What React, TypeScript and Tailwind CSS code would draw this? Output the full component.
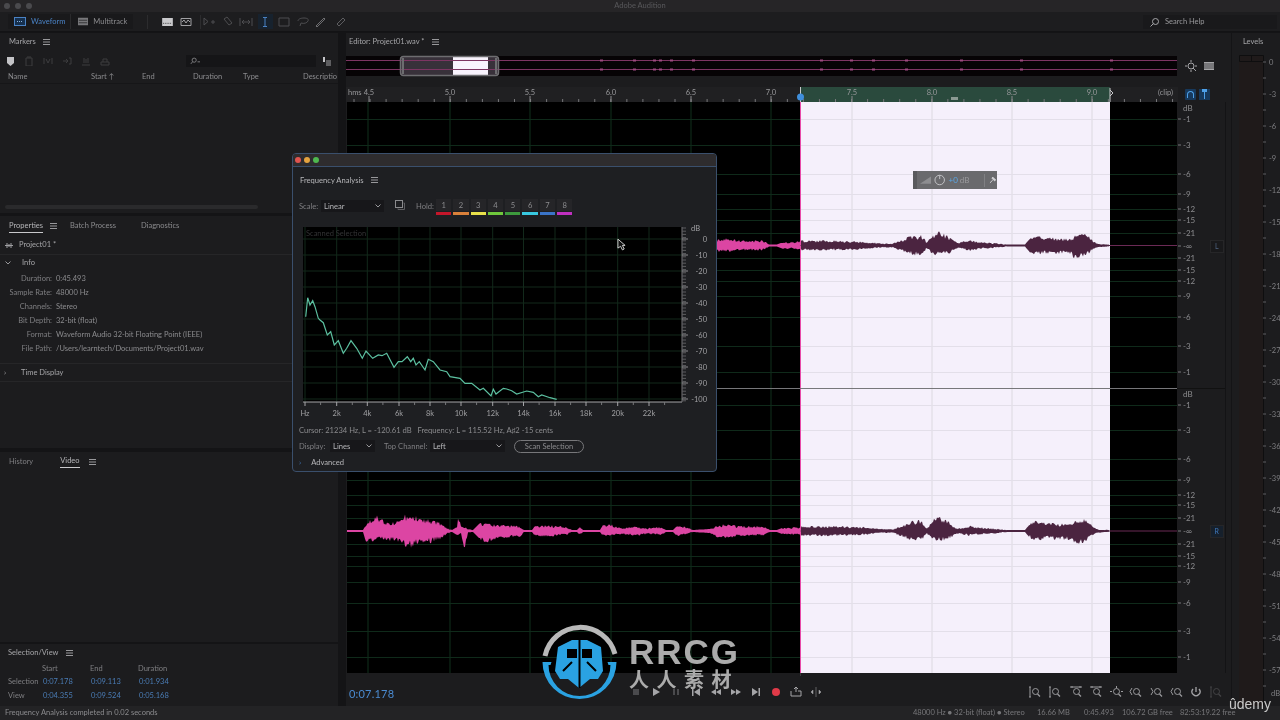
const FONT = "font-['Lato','Liberation_Sans',sans-serif]";

// [x, up, down] in screen px, the waveform is drawn from these
const pinkEnv = [
  [347, 1, 1], [363, 1, 1], [366, 6, 11], [375, 17, 10], [387, 8, 9], [397, 10, 11], [408, 18, 17], [420, 13, 12], [430, 11, 12], [440, 9, 8],
  [447, 3, 3], [452, 1, 1], [457, 4, 4], [458, 21, 6], [461, 6, 2], [464, 5, 20], [468, 2, 2], [473, 1, 1], [480, 8, 8], [484, 8, 12],
  [500, 6, 7], [520, 5, 6], [524, 1, 1], [532, 1, 1], [535, 5, 5], [547, 6, 6], [567, 4, 4], [572, 1, 1], [577, 1, 1], [580, 4, 4], [583, 1, 1],
  [600, 1, 1], [603, 6, 5], [610, 7, 5], [623, 3, 3], [636, 5, 5], [647, 3, 3], [662, 4, 4], [667, 1, 1], [673, 1, 1], [677, 5, 5], [687, 4, 3],
  [693, 1, 1], [710, 2, 2], [717, 6, 6], [727, 7, 7], [740, 5, 5], [763, 5, 5], [770, 1, 1], [777, 1, 1], [782, 3, 3], [798, 4, 4], [801, 4, 4],
];
const darkEnv = [
  [801, 5, 5], [830, 5, 5], [863, 4, 4], [883, 2, 2], [893, 2, 2], [907, 8, 8], [913, 11, 10], [922, 10, 9], [927, 3, 3], [933, 12, 10], [940, 14, 10],
  [950, 8, 8], [957, 3, 3], [970, 5, 5], [987, 3, 3], [1000, 2, 2], [1007, 1, 1], [1025, 1, 1], [1030, 7, 7], [1035, 10, 10], [1047, 8, 8], [1070, 7, 9],
  [1075, 10, 13], [1085, 13, 12], [1092, 6, 5], [1097, 2, 2], [1110, 1, 1],
];

function envPath(env: number[][], cy: number, seed: number) {
  const top: string[] = [];
  const bot: string[] = [];
  for (let i = 0; i < env.length - 1; i++) {
    const [x0, u0, d0] = env[i];
    const [x1, u1, d1] = env[i + 1];
    for (let x = x0; x < x1; x++) {
      const t = (x - x0) / (x1 - x0);
      const n = Math.abs(Math.sin(x * 12.9898 + seed) * 43758.5453) % 1;
      const n2 = Math.abs(Math.sin(x * 78.233 + seed) * 12543.1234) % 1;
      const big = u0 + d0 > 3;
      const ku = big ? 0.58 + n * 0.48 : 1;
      const kd = big ? 0.58 + n2 * 0.48 : 1;
      top.push(`${x},${(cy - (u0 + (u1 - u0) * t) * ku).toFixed(1)}`);
      bot.unshift(`${x},${(cy + (d0 + (d1 - d0) * t) * kd).toFixed(1)}`);
    }
  }
  return 'M' + top.concat(bot).join('L') + 'Z';
}

const gridX = [368, 450, 530, 611, 691, 771, 852, 932, 1012, 1092];
const gridY = [119, 145, 174, 194, 209, 220, 233, 258, 270, 281, 296, 317, 346, 372, 405, 430, 459, 480, 495, 505, 518, 544, 556, 566, 582, 603, 631, 657];

function Waveform() {
  return (
    <svg viewBox="347 102 830 571" className="w-[830px] h-[571px] block bg-black shrink-0 ml-[1px]">
      {gridX.map((x) => <line key={x} x1={x} x2={x} y1={102} y2={673} stroke="#11301c" />)}
      {gridY.map((y) => <line key={y} x1={347} x2={1177} y1={y + 0.5} y2={y + 0.5} stroke="#0f2a1a" />)}
      <rect x={801} y={102} width={309} height={571} fill="#f5f0fb" />
      <line x1={800.5} x2={800.5} y1={102} y2={673} stroke="#e84aa8" />
      {[852, 932, 1012, 1092].map((x) => <line key={x} x1={x} x2={x} y1={102} y2={673} stroke="#dcd9e0" />)}
      {gridY.map((y) => <line key={y} x1={801} x2={1110} y1={y + 0.5} y2={y + 0.5} stroke="#e3dfe9" />)}
      <line x1={347} x2={1177} y1={388.5} y2={388.5} stroke="#77777a" />
      {[245.5, 531].map((cy, i) => (
        <g key={cy}>
          <line x1={347} x2={801} y1={cy} y2={cy} stroke="#a83a80" />
          <line x1={1110} x2={1177} y1={cy} y2={cy} stroke="#6b2a55" />
          <line x1={801} x2={1110} y1={cy} y2={cy} stroke="#4b2440" />
          <path d={envPath(pinkEnv, cy, i)} fill="#dc45a3" />
          <path d={envPath(darkEnv, cy, i + 3)} fill="#4b2440" />
        </g>
      ))}
    </svg>
  );
}

const dbTop = [[108, 'dB'], [119, '-1'], [145, '-3'], [174, '-6'], [194, '-9'], [209, '-12'], [220, '-15'], [233, '-21'], [246, '-∞'], [258, '-21'], [270, '-15'], [281, '-12'], [296, '-9'], [317, '-6'], [346, '-3'], [372, '-1']] as const;
const dbBot = [[394, 'dB'], [405, '-1'], [430, '-3'], [459, '-6'], [480, '-9'], [495, '-12'], [505, '-15'], [518, '-21'], [531, '-∞'], [544, '-21'], [556, '-15'], [566, '-12'], [582, '-9'], [603, '-6'], [631, '-3'], [657, '-1']] as const;

function DbScale() {
  return (
    <svg viewBox="1177 102 49 571" className="w-[49px] h-[571px] block shrink-0">
      <line x1={1177} x2={1226} y1={388.5} y2={388.5} stroke="#111" />
      <line x1={1225.5} x2={1225.5} y1={102} y2={673} stroke="#131315" />
      {[...dbTop, ...dbBot].map(([y, t]) => (
        <g key={`${y}${t}`}>
          {t !== 'dB' && <line x1={1178} x2={1181} y1={y} y2={y} stroke="#77777a" />}
          <text x={1183} y={y + 3} fontSize={8} fill="#8b8b8e" fontFamily="Lato, sans-serif">{t}</text>
        </g>
      ))}
      <rect x={1210.5} y={240.5} width={13} height={12} fill="#19191b" stroke="#262628" />
      <text x={1215} y={249} fontSize={7} fill="#4f6380" fontFamily="Lato, sans-serif">L</text>
      <rect x={1210.5} y={525.5} width={13} height={12} fill="#16202c" stroke="#262628" />
      <text x={1214.5} y={534} fontSize={7} fill="#3f78bd" fontFamily="Lato, sans-serif">R</text>
    </svg>
  );
}

function Ruler() {
  const labels = [[369, '4.5'], [450, '5.0'], [530, '5.5'], [611, '6.0'], [691, '6.5'], [771, '7.0'], [852, '7.5'], [932, '8.0'], [1012, '8.5'], [1092, '9.0']] as const;
  const ticks: number[] = [];
  for (let x = 354; x < 1177; x += 16.05) ticks.push(x);
  return (
    <svg viewBox="346 87 832 15" className="w-[832px] h-[15px] block shrink-0">
      <rect x={346} y={87} width={832} height={15} fill="#202022" />
      <rect x={801} y={87} width={309} height={15} fill="#2a4a3d" />
      <text x={348} y={95} fontSize={7.5} fill="#98989b" fontFamily="Lato, sans-serif">hms</text>
      {ticks.map((x) => <line key={x} x1={x} x2={x} y1={99} y2={102} stroke="#77777a" />)}
      {labels.map(([x, t]) => (
        <g key={t}>
          <line x1={x} x2={x} y1={96} y2={102} stroke="#8b8b8e" />
          <text x={x} y={95} fontSize={7.5} textAnchor="middle" fill="#98989b" fontFamily="Lato, sans-serif">{t}</text>
        </g>
      ))}
      <text x={1158} y={95} fontSize={7.5} fill="#98989b" fontFamily="Lato, sans-serif">(clip)</text>
      <rect x={951} y={97} width={7} height={3} fill="#8b9a93" />
      <line x1={800.5} x2={800.5} y1={87} y2={102} stroke="#c9c9cc" />
      <circle cx={800.5} cy={97} r={3.5} fill="#3f8fdc" />
      <path d="M1110 88v14M1110 90l3 3-3 3" stroke="#c9c9cc" fill="none" />
    </svg>
  );
}

function Overview() {
  return (
    <svg viewBox="346 55 831 22" className="w-[831px] h-[22px] block shrink-0">
      <rect x={346} y={56} width={831} height={20} fill="#060305" />
      <rect x={400} y={56} width={99} height={20} rx={3} fill="#38313a" />
      <rect x={453} y={57} width={35} height={18} fill="#f8f3fd" />
      <line x1={346} x2={1177} y1={60.5} y2={60.5} stroke="#7d3563" />
      <line x1={346} x2={1177} y1={69.5} y2={69.5} stroke="#7d3563" />
      {[600, 633, 653, 659, 670, 692, 820, 850, 872, 905, 960, 1020, 1110].map((x) => (
        <g key={x} fill="#9c4a80">
          <rect x={x} y={59.5} width={3} height={2} />
          <rect x={x} y={68.5} width={3} height={2} />
        </g>
      ))}
      <rect x={400.5} y={56.5} width={98} height={19} rx={3} fill="none" stroke="#6d6d70" strokeWidth={1.5} />
      <rect x={402} y={58} width={2} height={16} fill="#6d6d70" />
      <rect x={495} y={58} width={2} height={16} fill="#6d6d70" />
    </svg>
  );
}

const trace = '305.7,316.7 307.7,297.7 310,305 312.7,300.7 315,306.7 318.3,318.3 320,320 323.3,322.7 327.3,335 330.7,331.7 334.3,345 338.3,340.7 343.3,353.3 346.7,348.3 351,340.7 356.7,348.3 362.3,358.3 366,351 372.7,358.3 378.3,355 382,355.7 386.7,353.3 394,367.3 398.3,361.7 402,361.7 407.3,356.7 410.7,361.7 413.3,358.3 416,365 419.3,361.7 425,370 428.3,359.3 433.3,361.7 440,370 446.7,371.7 450,376.7 460,378.3 465,383.3 471.7,383.3 480,390 483.3,388.3 491,396 493.3,389.3 496,394 503.3,388.3 506.7,389 511.7,390.7 516.7,394 526.7,391 533.3,392.3 538.3,396.7 541.7,395 550,397.7 556.7,399.3';

function FreqChart() {
  const xs = [[305, 'Hz'], [336.7, '2k'], [367.3, '4k'], [399, '6k'], [430, '8k'], [461, '10k'], [492.7, '12k'], [523.5, '14k'], [555, '16k'], [586, '18k'], [617.7, '20k'], [649, '22k']] as const;
  const ys = [[239, '0'], [255, '-10'], [271, '-20'], [287, '-30'], [303, '-40'], [319, '-50'], [335, '-60'], [351, '-70'], [367, '-80'], [383, '-90'], [399, '-100']] as const;
  const minor: number[] = [];
  for (let y = 228; y < 402; y += 3.2) minor.push(y);
  return (
    <svg viewBox="300 224 410 196" className="w-[410px] h-[196px] block">
      <rect x={303} y={227} width={379} height={175} fill="#000" />
      {xs.map(([x]) => <line key={x} x1={x} x2={x} y1={227} y2={402} stroke="#12291b" />)}
      {ys.map(([y]) => <line key={y} x1={303} x2={682} y1={y} y2={y} stroke="#12291b" />)}
      <text x={306} y={236} fontSize={7.5} fill="#333335" fontFamily="Lato, sans-serif">Scanned Selection</text>
      <line x1={303} x2={682} y1={402} y2={402} stroke="#a5a5a8" />
      <line x1={682} x2={682} y1={227} y2={402} stroke="#77777a" />
      {xs.map(([x, t]) => (
        <g key={t}>
          <line x1={x} x2={x} y1={402} y2={406} stroke="#a5a5a8" />
          <line x1={x + 15.6} x2={x + 15.6} y1={402} y2={405} stroke="#77777a" />
          <text x={x} y={416} fontSize={7.5} textAnchor="middle" fill="#a0a0a3" fontFamily="Lato, sans-serif">{t}</text>
        </g>
      ))}
      {minor.map((y) => <line key={y} x1={682} x2={686} y1={y} y2={y} stroke="#5d5d60" />)}
      {ys.map(([y, t]) => (
        <g key={t}>
          <line x1={682} x2={688} y1={y} y2={y} stroke="#8b8b8e" />
          <text x={707} y={y + 3} fontSize={7.5} textAnchor="end" fill="#a0a0a3" fontFamily="Lato, sans-serif">{t}</text>
        </g>
      ))}
      <text x={691} y={231} fontSize={7.5} fill="#a0a0a3" fontFamily="Lato, sans-serif">dB</text>
      <polyline points={trace} fill="none" stroke="#5cc0a0" strokeWidth={1.2} />
    </svg>
  );
}

function Burger({ className = '' }: { className?: string }) {
  return (
    <svg viewBox="0 0 7 6" className={`w-[7px] h-[6px] shrink-0 ${className}`}>
      <path d="M0 .5h7M0 3h7M0 5.5h7" stroke="#98989b" />
    </svg>
  );
}

function Chevron() {
  return (
    <svg viewBox="0 0 6 4" className="w-[6px] h-[4px]">
      <path d="M.5.5 3 3 5.5.5" fill="none" stroke="#98989b" />
    </svg>
  );
}

function Select({ label, value, w, lw }: { label: string; value: string; w: string; lw: string }) {
  return (
    <div className="flex items-center">
      <span className={`text-[#7f7f82] whitespace-nowrap ${lw}`}>{label}</span>
      <div className={`flex items-center justify-between h-[12px] ml-[3px] pl-[3px] pr-[3px] bg-[#17171a] text-[#b5b5b8] ${w}`}>
        <span>{value}</span>
        <Chevron />
      </div>
    </div>
  );
}

const holdColors = ['bg-[#c4162a]', 'bg-[#d9803a]', 'bg-[#e8e04a]', 'bg-[#6fc83c]', 'bg-[#3d9a3d]', 'bg-[#38c8e0]', 'bg-[#3a74c8]', 'bg-[#c030c0]'];

function FrequencyDialog() {
  return (
    <div className={`absolute left-[292px] top-[153px] w-[425px] h-[319px] rounded-[4px] overflow-hidden flex flex-col border border-[#3a4f6c] bg-[#1e1f22] text-[7.6px] ${FONT}`}>
      <div className="h-[13px] shrink-0 bg-[#2e2c2e] border-b border-[#3a4f6c] flex items-center gap-[3px] pl-[2px]">
        <span className="w-[6px] h-[6px] rounded-full bg-[#e0544f]" />
        <span className="w-[6px] h-[6px] rounded-full bg-[#e5a33f]" />
        <span className="w-[6px] h-[6px] rounded-full bg-[#4fb84f]" />
      </div>
      <div className="flex items-center gap-[7px] pl-[7px] h-[24px] mt-[1px] text-[#b5b5b8] shrink-0">
        <span>Frequency Analysis</span>
        <Burger />
      </div>
      <div className="flex items-start h-[26px] pl-[6px] pt-[1px] mt-[6px] shrink-0">
        <div className="mt-[1px] w-[96px] shrink-0">
          <Select label="Scale:" value="Linear" w="w-[63px]" lw="w-[19px]" />
        </div>
        <svg viewBox="0 0 10 10" className="w-[10px] h-[10px] mt-[1px] mr-[11px] shrink-0">
          <rect x=".5" y=".5" width="7" height="7" fill="none" stroke="#8b8b8e" />
          <path d="M8.5 3h1v6.5H3v-1" fill="none" stroke="#5d5d60" />
        </svg>
        <span className="text-[#7f7f82] mt-[2px] w-[20px] shrink-0">Hold:</span>
        <div className="flex gap-[2px]">
          {holdColors.map((c, i) => (
            <div key={c} className="w-[15.3px]">
              <div className="h-[12px] bg-[#252528] text-[#8b8b8e] text-center leading-[12px]">{i + 1}</div>
              <div className={`h-[3px] mt-[1px] ${c}`} />
            </div>
          ))}
        </div>
      </div>
      <div className="ml-[7px] shrink-0">
        <FreqChart />
      </div>
      <div className="pl-[6px] mt-[5px] text-[#8b8b8e] shrink-0">
        Cursor: 21234 Hz, L = -120.61 dB &nbsp; Frequency: L = 115.52 Hz, A♯2 -15 cents
      </div>
      <div className="flex items-center pl-[6px] mt-[4px] h-[14px] shrink-0">
        <div className="w-[85px] shrink-0"><Select label="Display:" value="Lines" w="w-[45px]" lw="w-[28px]" /></div>
        <Select label="Top Channel:" value="Left" w="w-[75px]" lw="w-[43px]" />
        <div className="ml-[9px] w-[70px] h-[13px] rounded-full border border-[#77777a] text-[#8b8b8e] text-center leading-[11px]">Scan Selection</div>
      </div>
      <div className="flex items-center pl-[6px] gap-[10px] mt-[4px] text-[#b5b5b8] shrink-0">
        <span className="text-[#3f78bd]">›</span>
        <span>Advanced</span>
      </div>
    </div>
  );
}

function Tool({ d, color = '#4d4d50' }: { d: string; color?: string }) {
  return (
    <svg viewBox="0 0 14 12" className="w-[14px] h-[12px] shrink-0">
      <path d={d} fill="none" stroke={color} />
    </svg>
  );
}

function Toolbar() {
  return (
    <div className="h-[20px] shrink-0 flex items-center bg-[#1d1d1f] border-b border-[#131315]">
      <div className="ml-[8px] h-[15px] flex items-center bg-[#19191b]">
        <div className="flex items-center gap-[5px] pl-[6px] pr-[5px] h-full border-r border-[#2a2a2c] text-[#4a82c4]">
          <svg viewBox="0 0 12 9" className="w-[12px] h-[9px]"><rect x=".5" y=".5" width="11" height="8" fill="#16304e" stroke="#4a82c4" /><path d="M3 4.5h6" stroke="#8ab4e0" strokeDasharray="1 1" /></svg>
          <span>Waveform</span>
        </div>
        <div className="flex items-center gap-[5px] pl-[7px] pr-[6px] text-[#8b8b8e]">
          <svg viewBox="0 0 12 9" className="w-[10px] h-[9px]"><rect width="12" height="9" fill="#77777a" /><path d="M1 3h10M1 6h10" stroke="#2a2a2c" /></svg>
          <span>Multitrack</span>
        </div>
      </div>
      <div className="w-px h-[14px] bg-[#2c2c2e] ml-[14px] mr-[14px]" />
      <div className="flex items-center gap-[6px]">
        <svg viewBox="0 0 12 9" className="w-[11px] h-[8px]"><rect width="12" height="9" fill="#c9c9cc" /><path d="M1 6h10" stroke="#333" strokeDasharray="1 1" /></svg>
        <Tool d="M2 2.5h10v7H2zM3 6l2-2 2 3 2-3 2 2" color="#a0a0a3" />
      </div>
      <div className="w-px h-[14px] bg-[#2c2c2e] ml-[7px] mr-[1px]" />
      <div className="flex items-center gap-[4.5px]">
        <Tool d="M2 2v7l4-3.5zM9 6h4M11 4v4" />
        <Tool d="M3 3l3-2 5 6-3 2z" />
        <Tool d="M1 2v8M13 2v8M3 6h8M3 6l2-2M3 6l2 2M11 6l-2-2M11 6l-2 2" />
        <div className="w-[15px] h-[15px] flex items-center justify-center bg-[#17222e]">
          <Tool d="M5 1.5h4M5 10.5h4M7 1.5v9" color="#4a82c4" />
        </div>
        <Tool d="M2 2h10v8H2z" />
        <Tool d="M2 5c0-2 3-3 6-3s5 1 4 3-4 3-7 2l-1 3" />
        <Tool d="M2 10l8-8 1 1-8 8z" color="#6d6d70" />
        <Tool d="M4 8l6-6 2 2-6 6z" color="#5d5d60" />
      </div>
    </div>
  );
}

function MarkerIcons() {
  return (
    <div className="flex items-center h-[14px] pl-[7px]">
      <svg viewBox="0 0 7 9" className="w-[7px] h-[9px]"><path d="M0 0h7v6L3.5 9 0 6z" fill="#c4c4c7" /></svg>
      {[10, 9, 9, 9, 9].map((ml, i) => (
        <svg key={i} viewBox="0 0 10 10" className="w-[10px] h-[10px] opacity-80" style={{ marginLeft: ml }}>
          <path d={['M2 2h6v8H2zM3 1h4', 'M1 2v6M9 2v6M3 3l2 4 2-4', 'M1 5h5M4 3l2 2-2 2M7 2h2v6H7', 'M1 9h8M3 2v5M7 2v5M5 3v4', 'M1 9V6h8v3zM3 6V3h4v3'][i]} fill="none" stroke="#444447" />
        </svg>
      ))}
    </div>
  );
}

function MarkersPanel() {
  return (
    <div className="h-[180px] bg-[#1c1c1e] flex flex-col shrink-0 text-[#8b8b8e]">
      <div className="flex items-center gap-[7px] h-[17px] pl-[9px] text-[#a5a5a8]">
        <span>Markers</span>
        <Burger />
      </div>
      <div className="flex items-center h-[14px] mt-[4px]">
        <MarkerIcons />
        <div className="ml-[76px] w-[130px] h-[12px] bg-[#151517] flex items-center pl-[4px]">
          <svg viewBox="0 0 12 8" className="w-[10px] h-[8px]"><circle cx="5" cy="3" r="2.5" fill="none" stroke="#8b8b8e" /><path d="M3 5 1 7.5" stroke="#8b8b8e" /><path d="M9 5h3" stroke="#8b8b8e" /></svg>
        </div>
        <svg viewBox="0 0 9 9" className="ml-[6px] w-[9px] h-[9px]"><path d="M2 0v5" stroke="#c4c4c7" strokeWidth="2" /><path d="M4 4h5M4 6h5M4 8h5" stroke="#a0a0a3" /></svg>
      </div>
      <div className="grid grid-cols-[83px_51px_51px_50px_60px_1fr] pl-[8px] mt-[2px] h-[14px] items-center border-b border-[#161618] overflow-hidden whitespace-nowrap">
        <span>Name</span>
        <span>Start ↑</span>
        <span>End</span>
        <span>Duration</span>
        <span>Type</span>
        <span>Descriptio</span>
      </div>
      <div className="flex-1 flex flex-col justify-end pb-[4px] pl-[5px]">
        <div className="w-[253px] h-[4px] rounded-full bg-[#2a2a2c]" />
      </div>
    </div>
  );
}

function InfoRow({ k, v }: { k: string; v: string }) {
  return (
    <div className="flex h-[14px] items-center">
      <span className="w-[52px] text-right text-[#7f7f82] whitespace-nowrap">{k}</span>
      <span className="ml-[4px] text-[#8b8b8e] whitespace-nowrap">{v}</span>
    </div>
  );
}

function PropertiesPanel() {
  return (
    <div className="h-[232px] mt-[3px] bg-[#1c1c1e] flex flex-col shrink-0 text-[#8b8b8e]">
      <div className="flex h-[20px] items-center pl-[9px] shrink-0">
        <div className="h-[14px] flex items-center border-b-[1.5px] border-[#c9c9cc] text-[#b5b5b8] whitespace-nowrap">Properties</div>
        <Burger className="ml-[7px]" />
        <span className="ml-[13px]">Batch Process</span>
        <span className="ml-[25px]">Diagnostics</span>
      </div>
      <div className="flex items-center h-[19px] pl-[5px] gap-[6px] border-b border-[#262628] text-[#a5a5a8] shrink-0">
        <svg viewBox="0 0 8 5" className="w-[8px] h-[5px]"><path d="M0 2.5h8M2 0v5M4 1v3M6 0v5" stroke="#a0a0a3" /></svg>
        <span>Project01 *</span>
      </div>
      <div className="flex items-center h-[16px] pl-[5px] gap-[11px] text-[#a5a5a8] shrink-0">
        <Chevron />
        <span>Info</span>
      </div>
      <div className="flex flex-col mt-[1px] pb-[7px] border-b border-[#262628] shrink-0">
        <InfoRow k="Duration:" v="0:45.493" />
        <InfoRow k="Sample Rate:" v="48000 Hz" />
        <InfoRow k="Channels:" v="Stereo" />
        <InfoRow k="Bit Depth:" v="32-bit (float)" />
        <InfoRow k="Format:" v="Waveform Audio 32-bit Floating Point (IEEE)" />
        <InfoRow k="File Path:" v="/Users/learntech/Documents/Project01.wav" />
      </div>
      <div className="flex items-center h-[18px] pl-[4px] gap-[11px] text-[#a5a5a8] border-b border-[#262628] shrink-0">
        <span className="w-[6px]">›</span>
        <span>Time Display</span>
      </div>
    </div>
  );
}

function HistoryPanel() {
  return (
    <div className="h-[190px] mt-[4px] bg-[#1c1c1e] text-[#7f7f82] shrink-0">
      <div className="flex h-[15px] mt-[1px] pt-[1px] items-end pl-[9px]">
        <span className="pb-[1px]">History</span>
        <div className="ml-[27px] border-b-[1.5px] border-[#c9c9cc] text-[#b5b5b8] pb-[1px]">Video</div>
        <Burger className="ml-[9px] mb-[3px]" />
      </div>
    </div>
  );
}

function SelectionPanel() {
  const rows = [['Selection', '0:07.178', '0:09.113', '0:01.934'], ['View', '0:04.355', '0:09.524', '0:05.168']];
  return (
    <div className="flex-1 mt-[2px] bg-[#1c1c1e] text-[#7f7f82] pl-[8px]">
      <div className="flex items-center gap-[7px] h-[14px] mt-[2px] text-[#a5a5a8]"><span>Selection/View</span><Burger /></div>
      <div className="grid grid-cols-[34px_48px_48px_48px] mt-[3px] h-[12px] items-center">
        <span /><span>Start</span><span>End</span><span>Duration</span>
      </div>
      {rows.map((r) => (
        <div key={r[0]} className="grid grid-cols-[35px_48px_48px_48px] h-[14px] items-center">
          <span>{r[0]}</span>
          {r.slice(1).map((v) => <span key={v} className="text-[#4a7cb5]">{v}</span>)}
        </div>
      ))}
    </div>
  );
}

function Transport() {
  const c = '#a5a5a8';
  const icons = [
    <rect key="stop" x="3" y="3" width="6" height="6" fill="#4a4a4d" />,
    <path key="play" d="M3 2l7 4-7 4z" fill={c} />,
    <path key="pause" d="M3 3h2v6H3zM7 3h2v6H7z" fill="#4a4a4d" />,
    <path key="start" d="M2 2h1.5v8H2zM10 2v8L4 6z" fill={c} />,
    <path key="rew" d="M6 3v6L1 6zM11 3v6L6 6z" fill={c} />,
    <path key="ff" d="M1 3v6l5-3zM6 3v6l5-3z" fill={c} />,
    <path key="end" d="M2 2v8l6-4zM8.5 2H10v8H8.5z" fill={c} />,
    <circle key="rec" cx="6" cy="6" r="4" fill="#e03a48" />,
    <path key="loop" d="M1 5v5h10V5H8M6 6V1M4 3l2-2 2 2" fill="none" stroke={c} />,
    <path key="skip" d="M6 1v10M1 6l2-2v4zM11 6 9 4v4z" fill={c} stroke={c} strokeWidth=".5" />,
  ];
  return (
    <div className="flex items-center gap-[8px]">
      {icons.map((ic, i) => <svg key={i} viewBox="0 0 12 12" className="w-[12px] h-[12px]">{ic}</svg>)}
    </div>
  );
}

function ZoomIcon({ extra }: { extra: string }) {
  return (
    <svg viewBox="0 0 14 12" className="w-[14px] h-[12px]">
      <circle cx="7.5" cy="5.5" r="3" fill="none" stroke="#9a9a9d" />
      <path d="M9.5 8l2.5 2.5" stroke="#9a9a9d" strokeWidth="1.3" />
      <path d={extra} fill="none" stroke="#9a9a9d" />
    </svg>
  );
}

function Editor() {
  return (
    <div className="w-[885px] ml-[8px] bg-[#1c1c1e] flex flex-col shrink-0 text-[#8b8b8e]">
      <div className="flex items-center gap-[7px] h-[17px] pl-[3px] text-[#a5a5a8] shrink-0">
        <span>Editor: Project01.wav *</span>
        <Burger />
      </div>
      <div className="flex items-center h-[22px] mt-[5px] shrink-0">
        <Overview />
        <svg viewBox="0 0 12 12" className="w-[12px] h-[12px] ml-[8px]"><circle cx="6" cy="6" r="3" fill="none" stroke="#a5a5a8" /><path d="M8 8l3 3M6 0v2M0 6h2M10 6h2M6 10v2" stroke="#a5a5a8" /></svg>
        <div className="w-[10px] h-[8px] ml-[7px] bg-[#77777a] border-y border-[#a5a5a8]" />
      </div>
      <div className="flex items-center h-[15px] mt-[10px] shrink-0">
        <Ruler />
        <div className="w-[11px] h-[11px] ml-[7px] rounded-[1px] bg-[#17395c] flex items-center justify-center">
          <div className="w-[7px] h-[7px] rounded-t-full border-[1.5px] border-b-0 border-[#4ea0e8]" />
        </div>
        <div className="w-[11px] h-[11px] ml-[3px] bg-[#17395c] flex flex-col items-center">
          <div className="w-[5px] h-[3px] bg-[#4ea0e8]" />
          <div className="w-px h-[7px] bg-[#4ea0e8]" />
        </div>
      </div>
      <div className="flex shrink-0">
        <Waveform />
        <DbScale />
      </div>
      <div className="flex-1 relative flex items-start">
        <div className="absolute left-[454px] right-[430px] top-0 h-[3px] bg-[#3a3a3c]" />
        <div className="w-[60px] ml-[3px] mt-[14px] text-[11px] leading-[14px] text-[#4a8ad0] tracking-[0.2px]">0:07.178</div>
        <div className="ml-[221px] mt-[13px]"><Transport /></div>
        <div className="ml-[206px] mt-[13px] flex items-center gap-[6.3px]">
          <ZoomIcon extra="M2 1v10M1 1h2M1 11h2" />
          <ZoomIcon extra="M2 1v10M1 1h2M1 11h2" />
          <ZoomIcon extra="M1 1h12M3 0v2M11 0v2" />
          <ZoomIcon extra="M1 1h12M3 0v2M11 0v2" />
          <ZoomIcon extra="M1 5.5h2M12 5.5h2M7.5 0v2" />
          <ZoomIcon extra="M3 2 1 5.5 3 9" />
          <ZoomIcon extra="M1 2l2 3.5L1 9" />
          <ZoomIcon extra="M3 2 1 5.5 3 9" />
          <svg viewBox="0 0 12 12" className="w-[12px] h-[12px]"><path d="M3 3a4 4 0 1 0 6 0M6 1v5" fill="none" stroke="#a5a5a8" strokeWidth="1.3" /></svg>
          <div className="opacity-30"><ZoomIcon extra="M2 1v10M1 1h2M1 11h2" /></div>
        </div>
      </div>
    </div>
  );
}

function Levels() {
  const labels: number[] = [];
  for (let i = 0; i <= 57; i += 3) labels.push(i);
  const minor: number[] = [];
  for (let y = 62; y < 700; y += 16) minor.push(y);
  return (
    <div className="flex-1 ml-[1px] bg-[#1c1c1e] text-[#a5a5a8] flex flex-col min-w-0">
      <div className="h-[17px] pl-[11px] flex items-center shrink-0">Levels</div>
      <svg viewBox="1231 50 49 656" className="w-[49px] h-[656px] block">
        <rect x={1238} y={55} width={24} height={651} fill="#1f1a1a" />
        <path d="M1238.5 55.5h24v6h-24zM1250.5 55.5v6M1262.5 61v644" fill="none" stroke="#0e0e0f" />
        {minor.map((y) => <line key={y} x1={1262} x2={1265} y1={y} y2={y} stroke="#5d5d60" />)}
        {labels.map((n, i) => (
          <text key={n} x={1268} y={65 + i * 32} fontSize={7.5} fill="#7f7f82" fontFamily="Lato, sans-serif">{n === 0 ? '0' : `-${n}`}</text>
        ))}
        <text x={1270} y={696} fontSize={7.5} fill="#7f7f82" fontFamily="Lato, sans-serif">dB</text>
      </svg>
    </div>
  );
}

function StatusBar() {
  return (
    <div className="h-[14px] shrink-0 bg-[#232325] text-[#77777a] flex items-center pl-[5px] whitespace-nowrap">
      <span className="w-[908px] text-[#8b8b8e]">Frequency Analysis completed in 0.02 seconds</span>
      <span className="w-[124px]">48000 Hz ● 32-bit (float) ● Stereo</span>
      <span className="w-[47px]">16.66 MB</span>
      <span className="w-[38px]">0:45.493</span>
      <span className="w-[58px]">106.72 GB free</span>
      <span>82:53:19.22 free</span>
    </div>
  );
}

function GainHud() {
  return (
    <div className="absolute left-[913px] top-[171px] w-[84px] h-[18px] bg-[#6a6a6d] flex items-center text-[8px]">
      <div className="w-[4px] h-full bg-[#5a5a5d]" />
      <svg viewBox="0 0 12 8" className="w-[12px] h-[8px] ml-[3px]"><path d="M0 8 12 0v8z" fill="#8d8d90" /></svg>
      <svg viewBox="0 0 12 12" className="w-[12px] h-[12px] ml-[3px]"><circle cx="6" cy="6" r="5" fill="none" stroke="#c4c4c7" /><path d="M6 1v4" stroke="#c4c4c7" /></svg>
      <span className="ml-[3px] text-[#5aa8e8]">+0</span>
      <span className="ml-[2px] text-[#9a9a9d]">dB</span>
      <div className="ml-[15px] w-px h-[13px] bg-[#808083]" />
      <svg viewBox="0 0 8 8" className="w-[8px] h-[8px] ml-[4px]"><path d="M1 7l3-3M3 2l3 3 1-1-3-3z" fill="#d5d5d8" stroke="#d5d5d8" /></svg>
    </div>
  );
}

function Watermark() {
  return (
    <>
      <svg viewBox="0 0 80 80" className="absolute left-[540px] top-[623px] w-[80px] h-[80px]">
        <path d="M5 33A36 36 0 0 1 75 31" fill="none" stroke="#b9b9b9" strokeWidth="5" />
        <path d="M2.5 39h9l-1 3h-2a31 31 0 0 0 62 0h-2l-1-3h9A37 37 0 0 1 2.5 39z" fill="#2aa2e2" />
        <path d="M18 24 32 17h15l14 7 2 24-5 8-8 0-11 9-11-9-8 0-5-8z" fill="#2aa2e2" />
        <path d="M39.5 17v48" stroke="#000" strokeWidth="2" />
        <path d="M28 27h8v7h-8zM43 27h8v7h-8zM23 48l9-9M56 48l-9-9" stroke="#000" strokeWidth="2" fill="#000" />
      </svg>
      <div className="absolute left-[629px] top-[639px] text-[35px] leading-[26px] font-bold tracking-[2px] text-[#ababab] font-['Liberation_Sans',sans-serif] whitespace-nowrap">RRCG</div>
      <div className="absolute left-[629px] top-[670px] text-[20px] leading-[18px] font-bold tracking-[7.5px] text-[#ababab] font-['Noto_Sans_CJK_SC',sans-serif] whitespace-nowrap">人人素材</div>
      <div className="absolute left-[1229px] top-[695px] text-[14px] leading-[18px] text-[#c9c9c9] font-['Liberation_Sans',sans-serif]">ûdemy</div>
    </>
  );
}

export default function App() {
  return (
    <div className={`relative w-[1280px] h-[720px] overflow-hidden flex flex-col bg-[#141416] text-[7.5px] leading-[10px] blur-[0.4px] ${FONT}`}>
      <div className="h-[12px] shrink-0 bg-[#262527] relative flex items-center justify-center text-[#58585b]">
        <div className="absolute left-[4px] flex gap-[5px]">
          <span className="w-[6px] h-[6px] rounded-full bg-[#4a4a4d]" />
          <span className="w-[6px] h-[6px] rounded-full bg-[#4a4a4d]" />
          <span className="w-[6px] h-[6px] rounded-full bg-[#4a4a4d]" />
        </div>
        Adobe Audition
      </div>
      <div className="relative shrink-0">
        <Toolbar />
        <div className="absolute left-[1143px] top-[3px] w-[134px] h-[14px] bg-[#19191b] flex items-center pl-[7px] gap-[6px] text-[#98989b]">
          <svg viewBox="0 0 9 9" className="w-[9px] h-[9px]"><circle cx="5.5" cy="3.5" r="3" fill="none" stroke="#a5a5a8" /><path d="M3.5 5.5 .5 8.5" stroke="#a5a5a8" /></svg>
          Search Help
        </div>
      </div>
      <div className="flex-1 flex min-h-0 mt-[1px]">
        <div className="w-[338px] flex flex-col shrink-0">
          <MarkersPanel />
          <PropertiesPanel />
          <HistoryPanel />
          <SelectionPanel />
        </div>
        <Editor />
        <Levels />
      </div>
      <StatusBar />
      <GainHud />
      <FrequencyDialog />
      <svg viewBox="0 0 10 14" className="absolute left-[617px] top-[238px] w-[9px] h-[13px]"><path d="M1 1v10l3-2 2 4 2-1-2-4h3z" fill="#111" stroke="#ddd" /></svg>
      <Watermark />
    </div>
  );
}
